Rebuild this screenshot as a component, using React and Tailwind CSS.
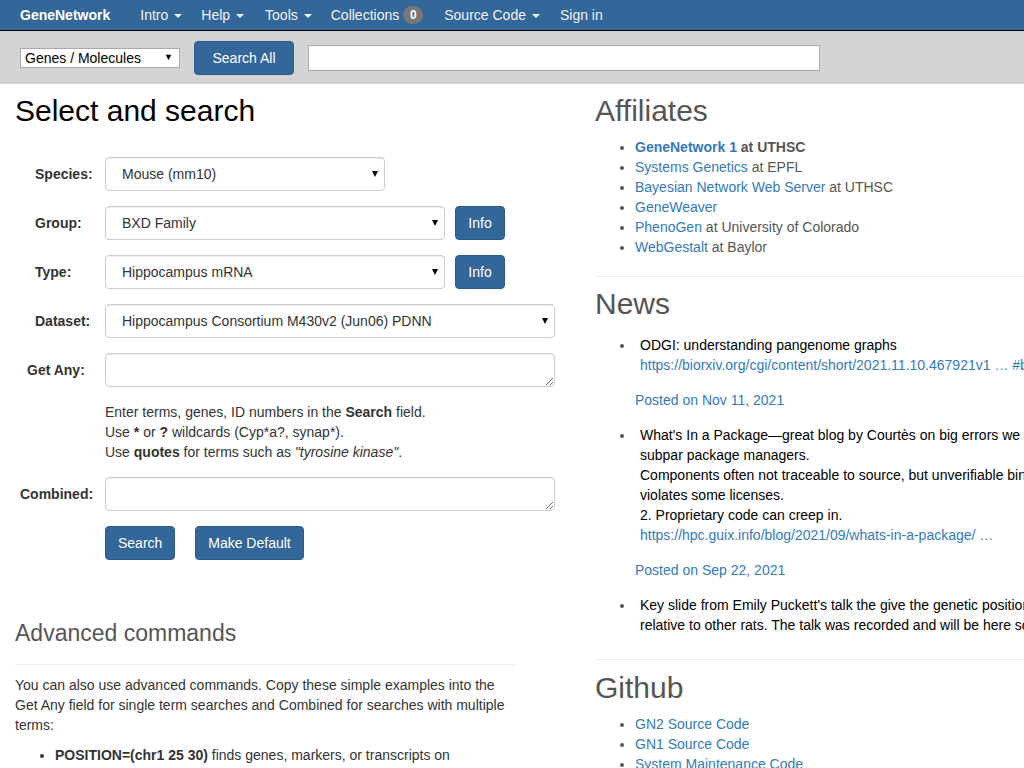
const linkCls = 'text-[#337ab7]'

function Caret() {
  return <span className="inline-block ml-[6px] align-middle w-0 h-0 border-t-[4px] border-t-current border-x-[4px] border-x-transparent" />
}

function FakeSelect({ value, width }) {
  return (
    <div className={`${width} h-[34px] flex items-center justify-between pl-[16px] pr-[6px] bg-white border border-[#ccc] rounded-[4px] shadow-[inset_0_1px_1px_rgba(0,0,0,0.075)] text-[#333]`}>
      <span>{value}</span>
      <span className="w-0 h-0 border-t-[6px] border-t-black border-x-[3.5px] border-x-transparent" />
    </div>
  )
}

function Btn({ children, className = '' }) {
  return (
    <button className={`h-[34px] px-[12px] bg-[#336699] border border-[#2c5a88] rounded-[4px] text-white text-[14px] ${className}`}>
      {children}
    </button>
  )
}

function FormRow({ label, labelPad, children }) {
  return (
    <div className="flex items-center">
      <div className="w-[90px] shrink-0 font-bold text-[#333]" style={{ paddingLeft: labelPad }}>{label}</div>
      {children}
    </div>
  )
}

export default function App() {
  return (
    <div className="w-[1024px] h-[768px] overflow-hidden bg-white text-[14px] leading-[20px] text-[#333]" style={{ fontFamily: '"Liberation Sans", Arial, sans-serif' }}>
      {/* top nav */}
      <nav className="h-[31px] bg-[#336699] border-b border-black flex items-center text-[#f2f2f2] whitespace-nowrap">
        <span className="ml-[20px] font-bold text-white">GeneNetwork</span>
        <span className="ml-[30px]">Intro<Caret /></span>
        <span className="ml-[19px]">Help<Caret /></span>
        <span className="ml-[21px]">Tools<Caret /></span>
        <span className="ml-[19px] flex items-center">Collections
          <span className="ml-[4px] w-[20px] h-[18px] rounded-full bg-[#777] text-white text-[12px] font-bold flex items-center justify-center">0</span>
        </span>
        <span className="ml-[21px]">Source Code<Caret /></span>
        <span className="ml-[20px]">Sign in</span>
      </nav>

      {/* search strip */}
      <div className="h-[53px] bg-[#d3d3d3] flex items-center">
        <div className="ml-[20px] w-[160px] h-[20px] bg-white border border-[#a9a9a9] flex items-center justify-between pl-[4px] pr-[6px] text-black">
          <span>Genes / Molecules</span>
          <span className="text-[9px] leading-none">▼</span>
        </div>
        <Btn className="ml-[14px] w-[100px]">Search All</Btn>
        <div className="ml-[14px] w-[512px] h-[26px] bg-white border border-[#aaa]" />
      </div>

      <div className="flex">
        {/* left column */}
        <div className="w-[580px] shrink-0 px-[15px]">
          <h1 className="mt-[10px] text-[30px] leading-[33px] text-black">Select and search</h1>

          <div className="mt-[30px] flex flex-col gap-[15px]">
            <FormRow label="Species:" labelPad="20px">
              <FakeSelect value="Mouse (mm10)" width="w-[280px]" />
            </FormRow>
            <FormRow label="Group:" labelPad="20px">
              <FakeSelect value="BXD Family" width="w-[340px]" />
              <Btn className="ml-[10px] w-[50px]">Info</Btn>
            </FormRow>
            <FormRow label="Type:" labelPad="20px">
              <FakeSelect value="Hippocampus mRNA" width="w-[340px]" />
              <Btn className="ml-[10px] w-[50px]">Info</Btn>
            </FormRow>
            <FormRow label="Dataset:" labelPad="20px">
              <FakeSelect value="Hippocampus Consortium M430v2 (Jun06) PDNN" width="w-[450px]" />
            </FormRow>
            <FormRow label="Get Any:" labelPad="12px">
              <textarea className="w-[450px] h-[34px] border border-[#ccc] rounded-[4px] resize-y shadow-[inset_0_1px_1px_rgba(0,0,0,0.075)]" />
            </FormRow>
            <div className="pl-[90px]">
              <div>Enter terms, genes, ID numbers in the <b>Search</b> field.</div>
              <div>Use <b>*</b> or <b>?</b> wildcards (Cyp*a?, synap*).</div>
              <div>Use <b>quotes</b> for terms such as <i>"tyrosine kinase"</i>.</div>
            </div>
            <FormRow label="Combined:" labelPad="5px">
              <textarea className="w-[450px] h-[34px] border border-[#ccc] rounded-[4px] resize-y shadow-[inset_0_1px_1px_rgba(0,0,0,0.075)]" />
            </FormRow>
            <div className="flex pl-[90px]">
              <Btn className="w-[70px]">Search</Btn>
              <Btn className="ml-[20px] w-[109px]">Make Default</Btn>
            </div>
          </div>

          <h3 className="mt-[60px] text-[23px] leading-[26px] text-[#555]">Advanced commands</h3>
          <hr className="mt-[18px] w-[500px] border-t border-[#eee]" />
          <p className="mt-[10px] w-[500px]">
            You can also use advanced commands. Copy these simple examples into the Get Any field for single term searches and Combined for searches with multiple terms:
          </p>
          <ul className="mt-[10px] pl-[40px] list-disc">
            <li><b>POSITION=(chr1 25 30)</b> finds genes, markers, or transcripts on</li>
          </ul>
        </div>

        {/* right column */}
        <div className="w-[600px] shrink-0 px-[15px] whitespace-nowrap">
          <h2 className="mt-[10px] text-[30px] leading-[33px] text-[#555]">Affiliates</h2>
          <ul className="mt-[10px] pl-[40px] list-disc text-[#555]">
            <li><a className={`${linkCls} font-bold`}>GeneNetwork 1</a> <b>at UTHSC</b></li>
            <li><a className={linkCls}>Systems Genetics</a> at EPFL</li>
            <li><a className={linkCls}>Bayesian Network Web Server</a> at UTHSC</li>
            <li><a className={linkCls}>GeneWeaver</a></li>
            <li><a className={linkCls}>PhenoGen</a> at University of Colorado</li>
            <li><a className={linkCls}>WebGestalt</a> at Baylor</li>
          </ul>

          <hr className="mt-[19px] border-t border-[#eee]" />
          <h2 className="mt-[10px] text-[30px] leading-[33px] text-[#555]">News</h2>

          <ul className="mt-[15px] pl-[40px] list-disc text-black marker:text-[#555]">
            <li className="pl-[5px]">
              ODGI: understanding pangenome graphs<br />
              <a className={linkCls}>https://biorxiv.org/cgi/content/short/2021.11.10.467921v1 … #bioinformatics</a>
            </li>
          </ul>
          <div className={`mt-[15px] pl-[40px] ${linkCls}`}>Posted on Nov 11, 2021</div>

          <ul className="mt-[15px] pl-[40px] list-disc text-black marker:text-[#555]">
            <li className="pl-[5px]">
              What's In a Package—great blog by Courtès on big errors we make<br />
              subpar package managers.<br />
              Components often not traceable to source, but unverifiable binaries<br />
              violates some licenses.<br />
              2. Proprietary code can creep in.<br />
              <a className={linkCls}>https://hpc.guix.info/blog/2021/09/whats-in-a-package/ …</a>
            </li>
          </ul>
          <div className={`mt-[15px] pl-[40px] ${linkCls}`}>Posted on Sep 22, 2021</div>

          <ul className="mt-[15px] pl-[40px] list-disc text-black marker:text-[#555]">
            <li className="pl-[5px]">
              Key slide from Emily Puckett's talk the give the genetic position of<br />
              relative to other rats. The talk was recorded and will be here soon
            </li>
          </ul>

          <hr className="mt-[24px] border-t border-[#eee]" />
          <h2 className="mt-[11px] text-[30px] leading-[33px] text-[#555]">Github</h2>
          <ul className="mt-[10px] pl-[40px] list-disc text-[#555]">
            <li><a className={linkCls}>GN2 Source Code</a></li>
            <li><a className={linkCls}>GN1 Source Code</a></li>
            <li><a className={linkCls}>System Maintenance Code</a></li>
          </ul>
        </div>
      </div>
    </div>
  )
}
